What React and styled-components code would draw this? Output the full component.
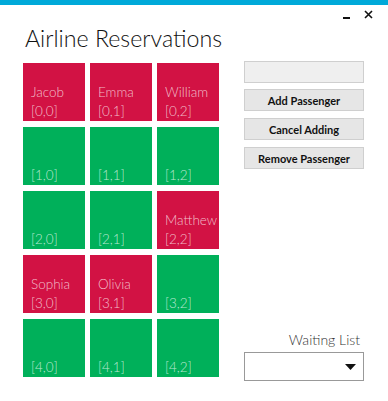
import React from "react";
import styled, { createGlobalStyle } from "styled-components";

const Global = createGlobalStyle`
  html, body {
    margin: 0;
    padding: 0;
    background: #ffffff;
  }
  body {
    font-family: "Open Sans", "Liberation Sans", sans-serif;
  }
`;

const Window = styled.div`
  width: 388px;
  height: 401px;
  background: #ffffff;
  display: flex;
  flex-direction: column;
  overflow: hidden;
`;

const AccentBar = styled.div`
  height: 5px;
  background: #00a9d9;
`;

const Controls = styled.div`
  height: 18px;
  display: flex;
  justify-content: flex-end;
  align-items: center;
  gap: 14px;
  padding-right: 15px;
`;

const Minimize = styled.div`
  width: 7px;
  height: 2px;
  background: #111;
  margin-top: 8px;
`;

const Title = styled.h1`
  margin: -4px 0 4px 25px;
  height: 38px;
  font-family: "Lato", "Open Sans", sans-serif;
  font-weight: 300;
  font-size: 23.2px;
  line-height: 38px;
  color: #111;
`;

const Body = styled.div`
  display: flex;
  padding-left: 23px;
`;

const Grid = styled.div`
  margin-top: 2px;
  display: grid;
  grid-template-columns: repeat(3, 62px);
  grid-auto-rows: 58px;
  column-gap: 5px;
  row-gap: 6px;
`;

const Tile = styled.div`
  background: ${(p) => (p.$taken ? "#d21244" : "#00b05a")};
  color: rgba(255, 255, 255, 0.72);
  display: flex;
  flex-direction: column;
  justify-content: flex-end;
  padding: 0 4px 0 8px;
  font-family: "Lato", "Open Sans", sans-serif;
  font-weight: 300;
  font-size: 13.5px;
  line-height: 19px;
  white-space: nowrap;
`;

const Side = styled.div`
  width: 120px;
  margin-left: 25px;
  height: 320px;
  display: flex;
  flex-direction: column;
`;

const NameBox = styled.div`
  height: 20px;
  border: 1px solid #cfcfcf;
  background: #efefef;
  margin-bottom: 6px;
`;

const Button = styled.button`
  height: 22px;
  margin: 0 0 7px 0;
  padding: 0;
  border: 1px solid #cfcfcf;
  background: #e6e6e6;
  font-family: "Lato", "Open Sans", sans-serif;
  font-weight: 700;
  font-size: 11px;
  color: #111;
`;

const Spacer = styled.div`
  flex: 1;
`;

const Label = styled.div`
  text-align: right;
  padding-right: 4px;
  font-family: "Lato", "Open Sans", sans-serif;
  font-weight: 300;
  font-size: 14px;
  line-height: 18px;
  color: #333;
  margin-bottom: 3px;
`;

const Combo = styled.div`
  height: 27px;
  border: 1px solid #999;
  display: flex;
  justify-content: flex-end;
  align-items: center;
  padding-right: 7px;
`;

const seats = [
  ["Jacob", "Emma", "William"],
  [null, null, null],
  [null, null, "Matthew"],
  ["Sophia", "Olivia", null],
  [null, null, null],
];

export default function App() {
  return (
    <Window>
      <Global />
      <AccentBar />
      <Controls>
        <Minimize />
        <svg width="9" height="9" viewBox="0 0 9 9">
          <path d="M1 1 L8 8 M8 1 L1 8" stroke="#111" strokeWidth="1.6" />
        </svg>
      </Controls>
      <Title>Airline Reservations</Title>
      <Body>
        <Grid>
          {seats.map((row, r) =>
            row.map((name, c) => (
              <Tile key={`${r}-${c}`} $taken={!!name}>
                {name && <span>{name}</span>}
                <span>[{r},{c}]</span>
              </Tile>
            ))
          )}
        </Grid>
        <Side>
          <NameBox />
          <Button>Add Passenger</Button>
          <Button>Cancel Adding</Button>
          <Button>Remove Passenger</Button>
          <Spacer />
          <Label>Waiting List</Label>
          <Combo>
            <svg width="11" height="6" viewBox="0 0 11 6">
              <path d="M0 0 L11 0 L5.5 6 Z" fill="#111" />
            </svg>
          </Combo>
        </Side>
      </Body>
    </Window>
  );
}
